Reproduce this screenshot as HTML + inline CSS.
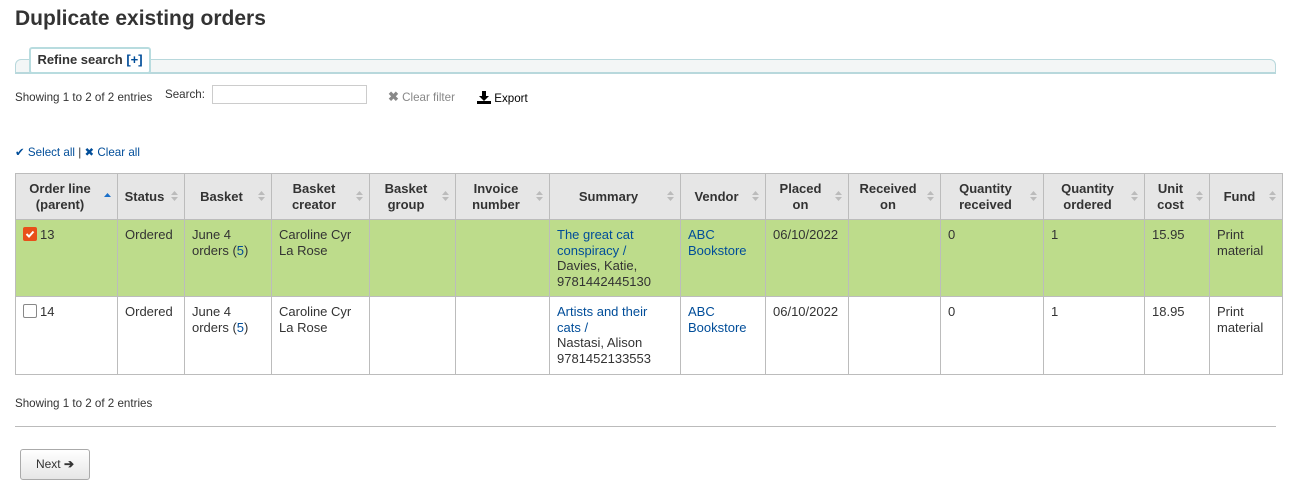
<!DOCTYPE html>
<html><head><meta charset="utf-8"><style>
body{margin:0;width:1290px;height:484px;background:#fff;font-family:"Liberation Sans",sans-serif;color:#333;position:relative;overflow:hidden}
.a{position:absolute}
h1{position:absolute;left:15px;top:7px;margin:0;font-size:21px;font-weight:bold;color:#333}
a{color:#004d99;text-decoration:none}
table{position:absolute;left:15px;top:173px;border-collapse:collapse;table-layout:fixed;width:1267px;font-size:13px}
th,td{border:1px solid #bcbcbc;padding:0 7px}
th{background:#e6e6e6;height:45px;font-weight:bold;text-align:center;position:relative;line-height:16px;padding-right:18px;padding-left:5px}
th .s{position:absolute;right:6px;top:17px;width:7px;height:10px}
td{vertical-align:top;padding-top:7px;line-height:15.5px}
tr.g td{background:#bddc8b;height:69px}
tr.w td{height:70px}
.cb{display:inline-block;width:12px;height:12px;border:1px solid #888;border-radius:2px;vertical-align:-2px;margin-right:3px;background:#fff}
.cb.on{background:#e8501a;border-color:#e8501a;position:relative}
.sm{font-size:11.6px}
</style></head><body>
<h1>Duplicate existing orders</h1>
<div class="a" style="left:15px;top:59px;width:1259px;height:12px;border:1px solid #b8d8dc;border-radius:6px 6px 0 0;background:#f3f6f6;border-bottom:2px solid #b8d8dc"></div>
<div class="a" style="left:29px;top:47px;width:118px;height:23px;border:2px solid #b8dcdf;border-radius:3px;background:#fff;font-size:13px;font-weight:bold;line-height:22px;text-align:center">Refine search <a style="color:#004d99">[+]</a></div>
<div class="a sm" style="left:15px;top:91px">Showing 1 to 2 of 2 entries</div>
<div class="a sm" style="left:165px;top:88px">Search:</div>
<div class="a" style="left:212px;top:85px;width:153px;height:17px;border:1px solid #ccc"></div>
<div class="a sm" style="left:388px;top:91px;color:#888"><b style="font-size:13px;line-height:10px">✖</b> Clear filter</div>
<div class="a sm" style="left:477px;top:91px;color:#000"><svg width="14" height="13" viewBox="0 0 14 13" style="vertical-align:-2px"><path d="M5 0h4v5h3l-5 5-5-5h3z" fill="#000"/><rect x="0" y="10" width="14" height="3" fill="#000"/></svg> Export</div>
<div class="a sm" style="left:15px;top:145px"><a>✔ Select all</a> | <a>✖ Clear all</a></div>
<table>
<colgroup><col style="width:102px"><col style="width:67px"><col style="width:87px"><col style="width:98px"><col style="width:86px"><col style="width:94px"><col style="width:131px"><col style="width:85px"><col style="width:83px"><col style="width:92px"><col style="width:103px"><col style="width:101px"><col style="width:65px"><col style="width:73px"></colgroup>
<tr>
<th>Order line (parent)<svg class="s" viewBox="0 0 7 10"><path d="M0 6l3.5-4 3.5 4z" fill="#1a6fc9"/></svg></th>
<th>Status<svg class="s" viewBox="0 0 7 10"><path d="M0 4l3.5-4 3.5 4zM0 6l3.5 4 3.5-4z" fill="#bbb"/></svg></th>
<th>Basket<svg class="s" viewBox="0 0 7 10"><path d="M0 4l3.5-4 3.5 4zM0 6l3.5 4 3.5-4z" fill="#bbb"/></svg></th>
<th>Basket creator<svg class="s" viewBox="0 0 7 10"><path d="M0 4l3.5-4 3.5 4zM0 6l3.5 4 3.5-4z" fill="#bbb"/></svg></th>
<th>Basket group<svg class="s" viewBox="0 0 7 10"><path d="M0 4l3.5-4 3.5 4zM0 6l3.5 4 3.5-4z" fill="#bbb"/></svg></th>
<th>Invoice number<svg class="s" viewBox="0 0 7 10"><path d="M0 4l3.5-4 3.5 4zM0 6l3.5 4 3.5-4z" fill="#bbb"/></svg></th>
<th>Summary<svg class="s" viewBox="0 0 7 10"><path d="M0 4l3.5-4 3.5 4zM0 6l3.5 4 3.5-4z" fill="#bbb"/></svg></th>
<th>Vendor<svg class="s" viewBox="0 0 7 10"><path d="M0 4l3.5-4 3.5 4zM0 6l3.5 4 3.5-4z" fill="#bbb"/></svg></th>
<th>Placed on<svg class="s" viewBox="0 0 7 10"><path d="M0 4l3.5-4 3.5 4zM0 6l3.5 4 3.5-4z" fill="#bbb"/></svg></th>
<th>Received on<svg class="s" viewBox="0 0 7 10"><path d="M0 4l3.5-4 3.5 4zM0 6l3.5 4 3.5-4z" fill="#bbb"/></svg></th>
<th>Quantity received<svg class="s" viewBox="0 0 7 10"><path d="M0 4l3.5-4 3.5 4zM0 6l3.5 4 3.5-4z" fill="#bbb"/></svg></th>
<th>Quantity ordered<svg class="s" viewBox="0 0 7 10"><path d="M0 4l3.5-4 3.5 4zM0 6l3.5 4 3.5-4z" fill="#bbb"/></svg></th>
<th>Unit cost<svg class="s" viewBox="0 0 7 10"><path d="M0 4l3.5-4 3.5 4zM0 6l3.5 4 3.5-4z" fill="#bbb"/></svg></th>
<th>Fund<svg class="s" viewBox="0 0 7 10"><path d="M0 4l3.5-4 3.5 4zM0 6l3.5 4 3.5-4z" fill="#bbb"/></svg></th>
</tr>
<tr class="g">
<td><span class="cb on"><svg width="12" height="12" viewBox="0 0 12 12" style="position:absolute;left:0;top:0"><path d="M2.5 6l2.5 2.5 4.5-5" stroke="#fff" stroke-width="2" fill="none"/></svg></span>13</td>
<td>Ordered</td><td>June 4 orders (<a>5</a>)</td><td>Caroline Cyr La Rose</td><td></td><td></td>
<td><a>The great cat conspiracy /</a><br>Davies, Katie, 9781442445130</td>
<td><a>ABC Bookstore</a></td><td>06/10/2022</td><td></td><td>0</td><td>1</td><td>15.95</td><td>Print material</td>
</tr>
<tr class="w">
<td><span class="cb"></span>14</td>
<td>Ordered</td><td>June 4 orders (<a>5</a>)</td><td>Caroline Cyr La Rose</td><td></td><td></td>
<td><a>Artists and their cats /</a><br>Nastasi, Alison 9781452133553</td>
<td><a>ABC Bookstore</a></td><td>06/10/2022</td><td></td><td>0</td><td>1</td><td>18.95</td><td>Print material</td>
</tr>
</table>
<div class="a sm" style="left:15px;top:397px">Showing 1 to 2 of 2 entries</div>
<div class="a" style="left:15px;top:426px;width:1261px;border-top:1px solid #bbb"></div>
<div class="a" style="left:20px;top:449px;width:68px;height:29px;border:1px solid #aaa;border-radius:3px;background:linear-gradient(#fff,#e6e6e6);font-size:12px;line-height:29px;text-align:center;color:#333">Next <b>➔</b></div>
</body></html>
